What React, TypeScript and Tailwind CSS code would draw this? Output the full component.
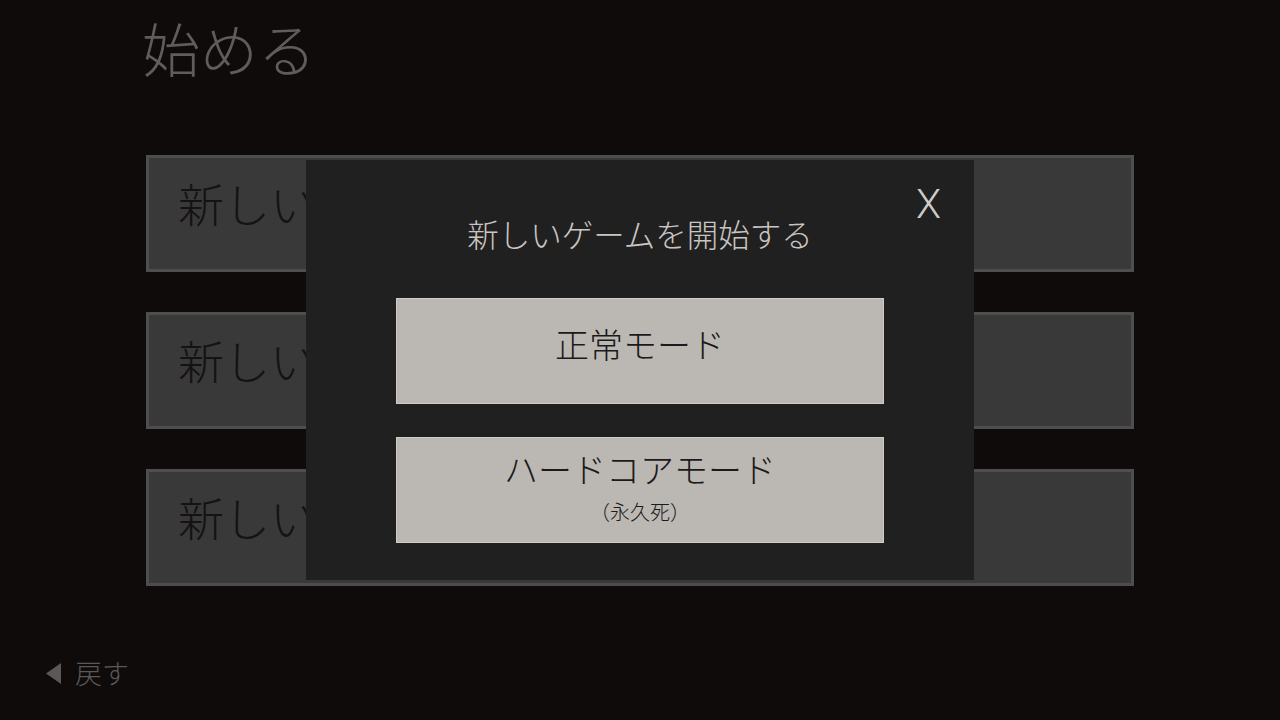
const font = { fontFamily: '"Noto Sans CJK JP", "Noto Sans", sans-serif' };

function SaveSlot() {
  return (
    <div className="h-[117px] border-[3px] border-[#4f4e4e] bg-[#3a3939] pl-[29px] pt-[14px]">
      <span className="text-[46px] font-light leading-[60px] text-[#141313]">新しいゲーム</span>
    </div>
  );
}

function ModeButton({ label, note }: { label: string; note?: string }) {
  return (
    <button
      className={
        note
          ? "flex h-[106px] w-[488px] flex-col items-center justify-center border border-[#cfccc7] bg-[#bbb8b3] pb-[7px] text-[#1b1a1a]"
          : "flex h-[106px] w-[488px] flex-col items-center justify-center border border-[#cfccc7] bg-[#bbb8b3] pb-[14px] text-[#1b1a1a]"
      }
    >
      <span className="text-[34px] font-light leading-[44px]">{label}</span>
      {note && <span className="mt-[7px] text-[20px] font-light leading-[28px]">{note}</span>}
    </button>
  );
}

export default function App() {
  return (
    <div className="relative h-[720px] w-[1280px] overflow-hidden bg-[#0f0b0b]" style={font}>
      <h1 className="pl-[142px] pt-[10px] text-[58px] font-light leading-[74px] text-[#5f5d5c]">始める</h1>

      <div className="ml-[146px] mt-[71px] flex w-[988px] flex-col gap-[40px]">
        <SaveSlot />
        <SaveSlot />
        <SaveSlot />
      </div>

      <div className="absolute bottom-[30px] left-[46px] flex items-center gap-[14px] text-[#5a5858]">
        <svg width="15" height="21" viewBox="0 0 15 21">
          <path d="M15 0 L0 10.5 L15 21 Z" fill="currentColor" />
        </svg>
        <span className="text-[27px] font-light leading-[34px]">戻す</span>
      </div>

      {/* new game dialog */}
      <div className="absolute left-[306px] top-[160px] flex h-[420px] w-[668px] flex-col items-center bg-[#212021]">
        <span
          className="absolute right-[33px] top-[20px] text-[41px] font-light leading-[48px] text-[#cfccc8]"
          style={{ fontFamily: '"Roboto", "Liberation Sans", sans-serif' }}
        >
          X
        </span>
        <h2 className="mt-[51px] text-[31.5px] font-light leading-[44px] text-[#c9c5c1]">新しいゲームを開始する</h2>
        <div className="mt-[43px] flex flex-col gap-[33px]">
          <ModeButton label="正常モード" />
          <ModeButton label="ハードコアモード" note="（永久死）" />
        </div>
      </div>
    </div>
  );
}
